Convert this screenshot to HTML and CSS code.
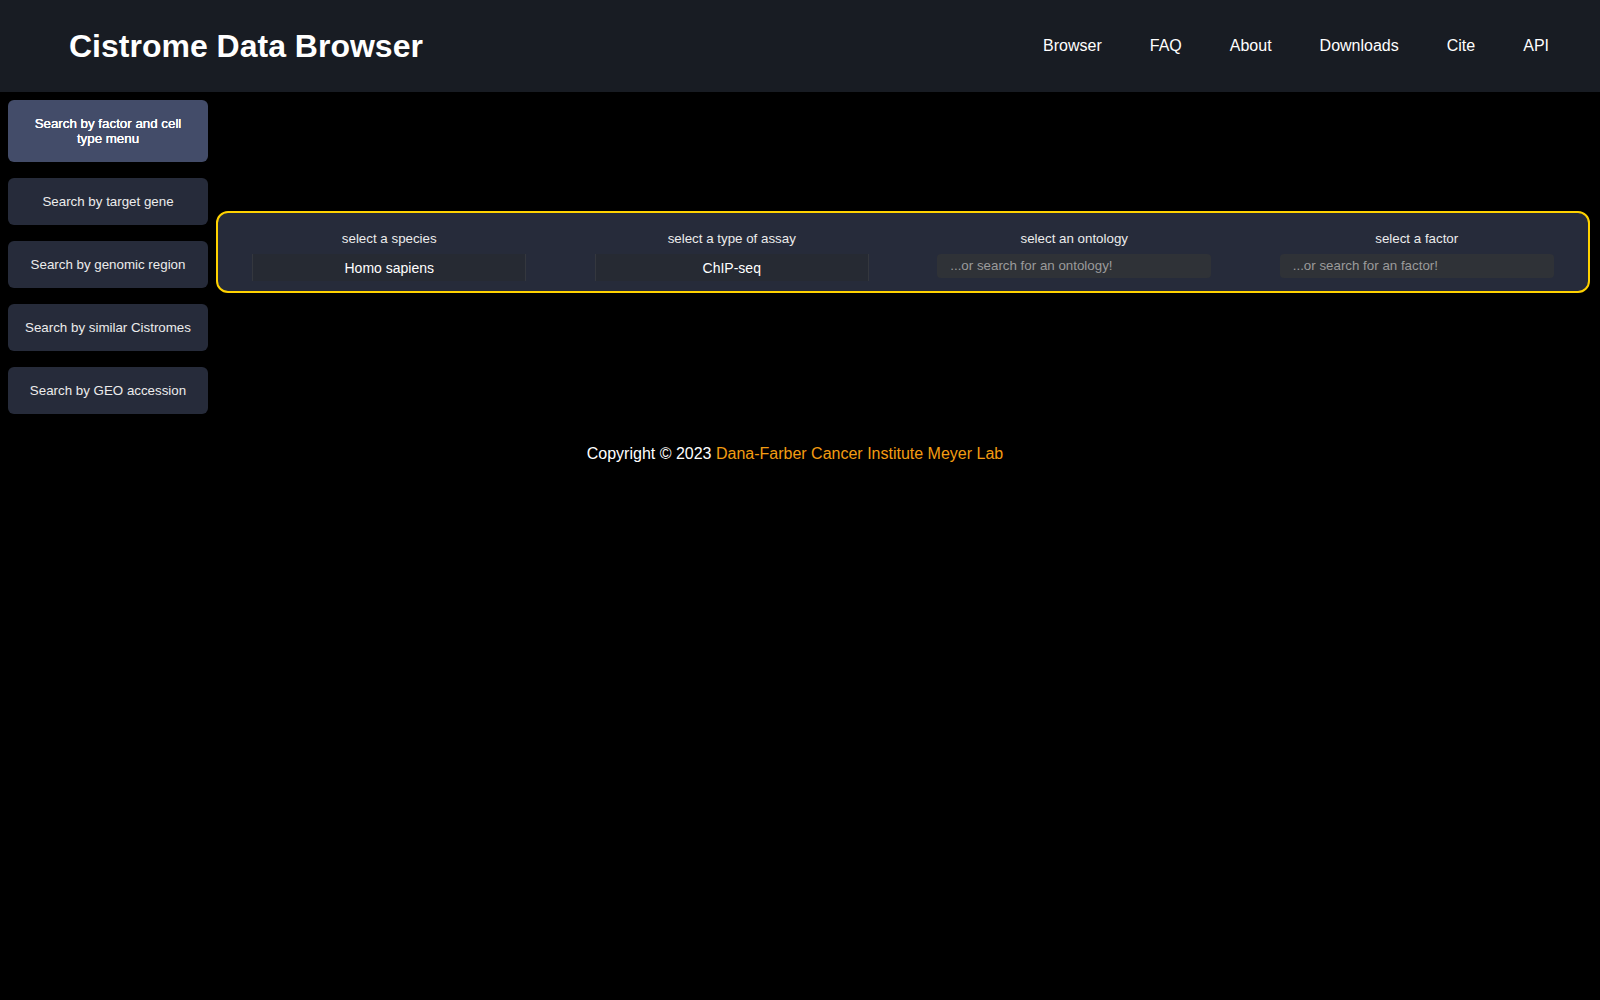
FILE: index.html
```html
<!DOCTYPE html>
<html>

<head>
    <title>Cistrome Data Browser</title>
    <meta charset="utf-8">
    <meta name="viewport" content="width=device-width, initial-scale=1.0">
    <link rel="stylesheet" href="styles.css">
</head>

<body>
    <header class="topbar">
        <h1 class="brand">Cistrome Data Browser</h1>
        <nav class="topnav">
            <a href="#">Browser</a>
            <a href="#">FAQ</a>
            <a href="#">About</a>
            <a href="#">Downloads</a>
            <a href="#">Cite</a>
            <a href="#">API</a>
        </nav>
    </header>

    <div class="content">
        <aside class="sidemenu">
            <button class="side_btn valgt">Search by factor and cell type menu</button>
            <button class="side_btn">Search by target gene</button>
            <button class="side_btn">Search by genomic region</button>
            <button class="side_btn">Search by similar Cistromes</button>
            <button class="side_btn">Search by GEO accession</button>
        </aside>

        <section class="filter_box">
            <div class="filter_col">
                <p class="filter_label">select a species</p>
                <select class="filter_select">
                    <option>Homo sapiens</option>
                    <option>Mus musculus</option>
                </select>
            </div>
            <div class="filter_col">
                <p class="filter_label">select a type of assay</p>
                <select class="filter_select">
                    <option>ChIP-seq</option>
                    <option>ATAC-seq</option>
                </select>
            </div>
            <div class="filter_col">
                <p class="filter_label">select an ontology</p>
                <input class="filter_input" type="text" placeholder="...or search for an ontology!">
            </div>
            <div class="filter_col">
                <p class="filter_label">select a factor</p>
                <input class="filter_input" type="text" placeholder="...or search for an factor!">
            </div>
        </section>
    </div>

    <footer class="footer">
        Copyright © 2023 <a href="#">Dana-Farber Cancer Institute Meyer Lab</a>
    </footer>
</body></html>
```

FILE: styles.css
```css
body {
    margin: 0;
    background-color: #000000;
    color: #ffffff;
    font-family: "Liberation Sans", Arial, sans-serif;
}

.topbar {
    display: flex;
    align-items: center;
    justify-content: space-between;
    height: 92px;
    padding: 0 51px 0 69px;
    background-color: #181c23;
}

.brand {
    margin: 0;
    font-size: 32px;
    font-weight: bold;
}

.topnav {
    display: flex;
    gap: 48px;
}

.topnav a {
    color: #ffffff;
    text-decoration: none;
    font-size: 16px;
}

.content {
    display: flex;
    align-items: flex-start;
}

.sidemenu {
    display: flex;
    flex-direction: column;
    gap: 16px;
    width: 200px;
    padding: 8px 0;
    margin-left: 8px;
}

.side_btn {
    padding: 16px 16px;
    border: none;
    border-radius: 6px;
    background-color: #262b3a;
    color: #ececec;
    font-family: "Liberation Sans", Arial, sans-serif;
    font-size: 13.333px;
    line-height: 15px;
    text-align: center;
    cursor: pointer;
}

.side_btn.valgt {
    background-color: #434c69;
    color: #ffffff;
    text-shadow: 0 0 0.6px #ffffff, 0 0 0.6px #ffffff;
}

.filter_box {
    flex: 1;
    display: grid;
    grid-template-columns: repeat(4, 1fr);
    margin: 119px 10px 0 8px;
    padding: 18px 0 10px;
    border: 2px solid #ffd200;
    border-radius: 12px;
    background-color: #262b3a;
}

.filter_col {
    display: flex;
    flex-direction: column;
    align-items: center;
}

.filter_label {
    margin: 0 0 8px;
    font-size: 13.333px;
    line-height: 15px;
    color: #ececec;
}

.filter_select {
    width: 80%;
    height: 27px;
    appearance: none;
    -webkit-appearance: none;
    border: none;
    border-left: 1px solid #34373e;
    border-right: 1px solid #34373e;
    border-radius: 0;
    background-color: #262a33;
    color: #ffffff;
    font-family: "Liberation Sans", Arial, sans-serif;
    font-size: 14px;
    text-align: center;
    text-align-last: center;
}

.filter_input {
    box-sizing: border-box;
    width: 80%;
    height: 24px;
    padding: 0 13px 2px;
    border: none;
    border-radius: 4px;
    background-color: #2f3237;
    color: #ffffff;
    font-family: "Liberation Sans", Arial, sans-serif;
    font-size: 13.333px;
}

.filter_input::placeholder {
    color: #9b9b9b;
}

.footer {
    margin-top: 23px;
    padding-right: 10px;
    text-align: center;
    font-size: 16px;
    line-height: 18px;
    color: #ffffff;
}

.footer a {
    color: #f39c12;
    text-decoration: none;
}
```
